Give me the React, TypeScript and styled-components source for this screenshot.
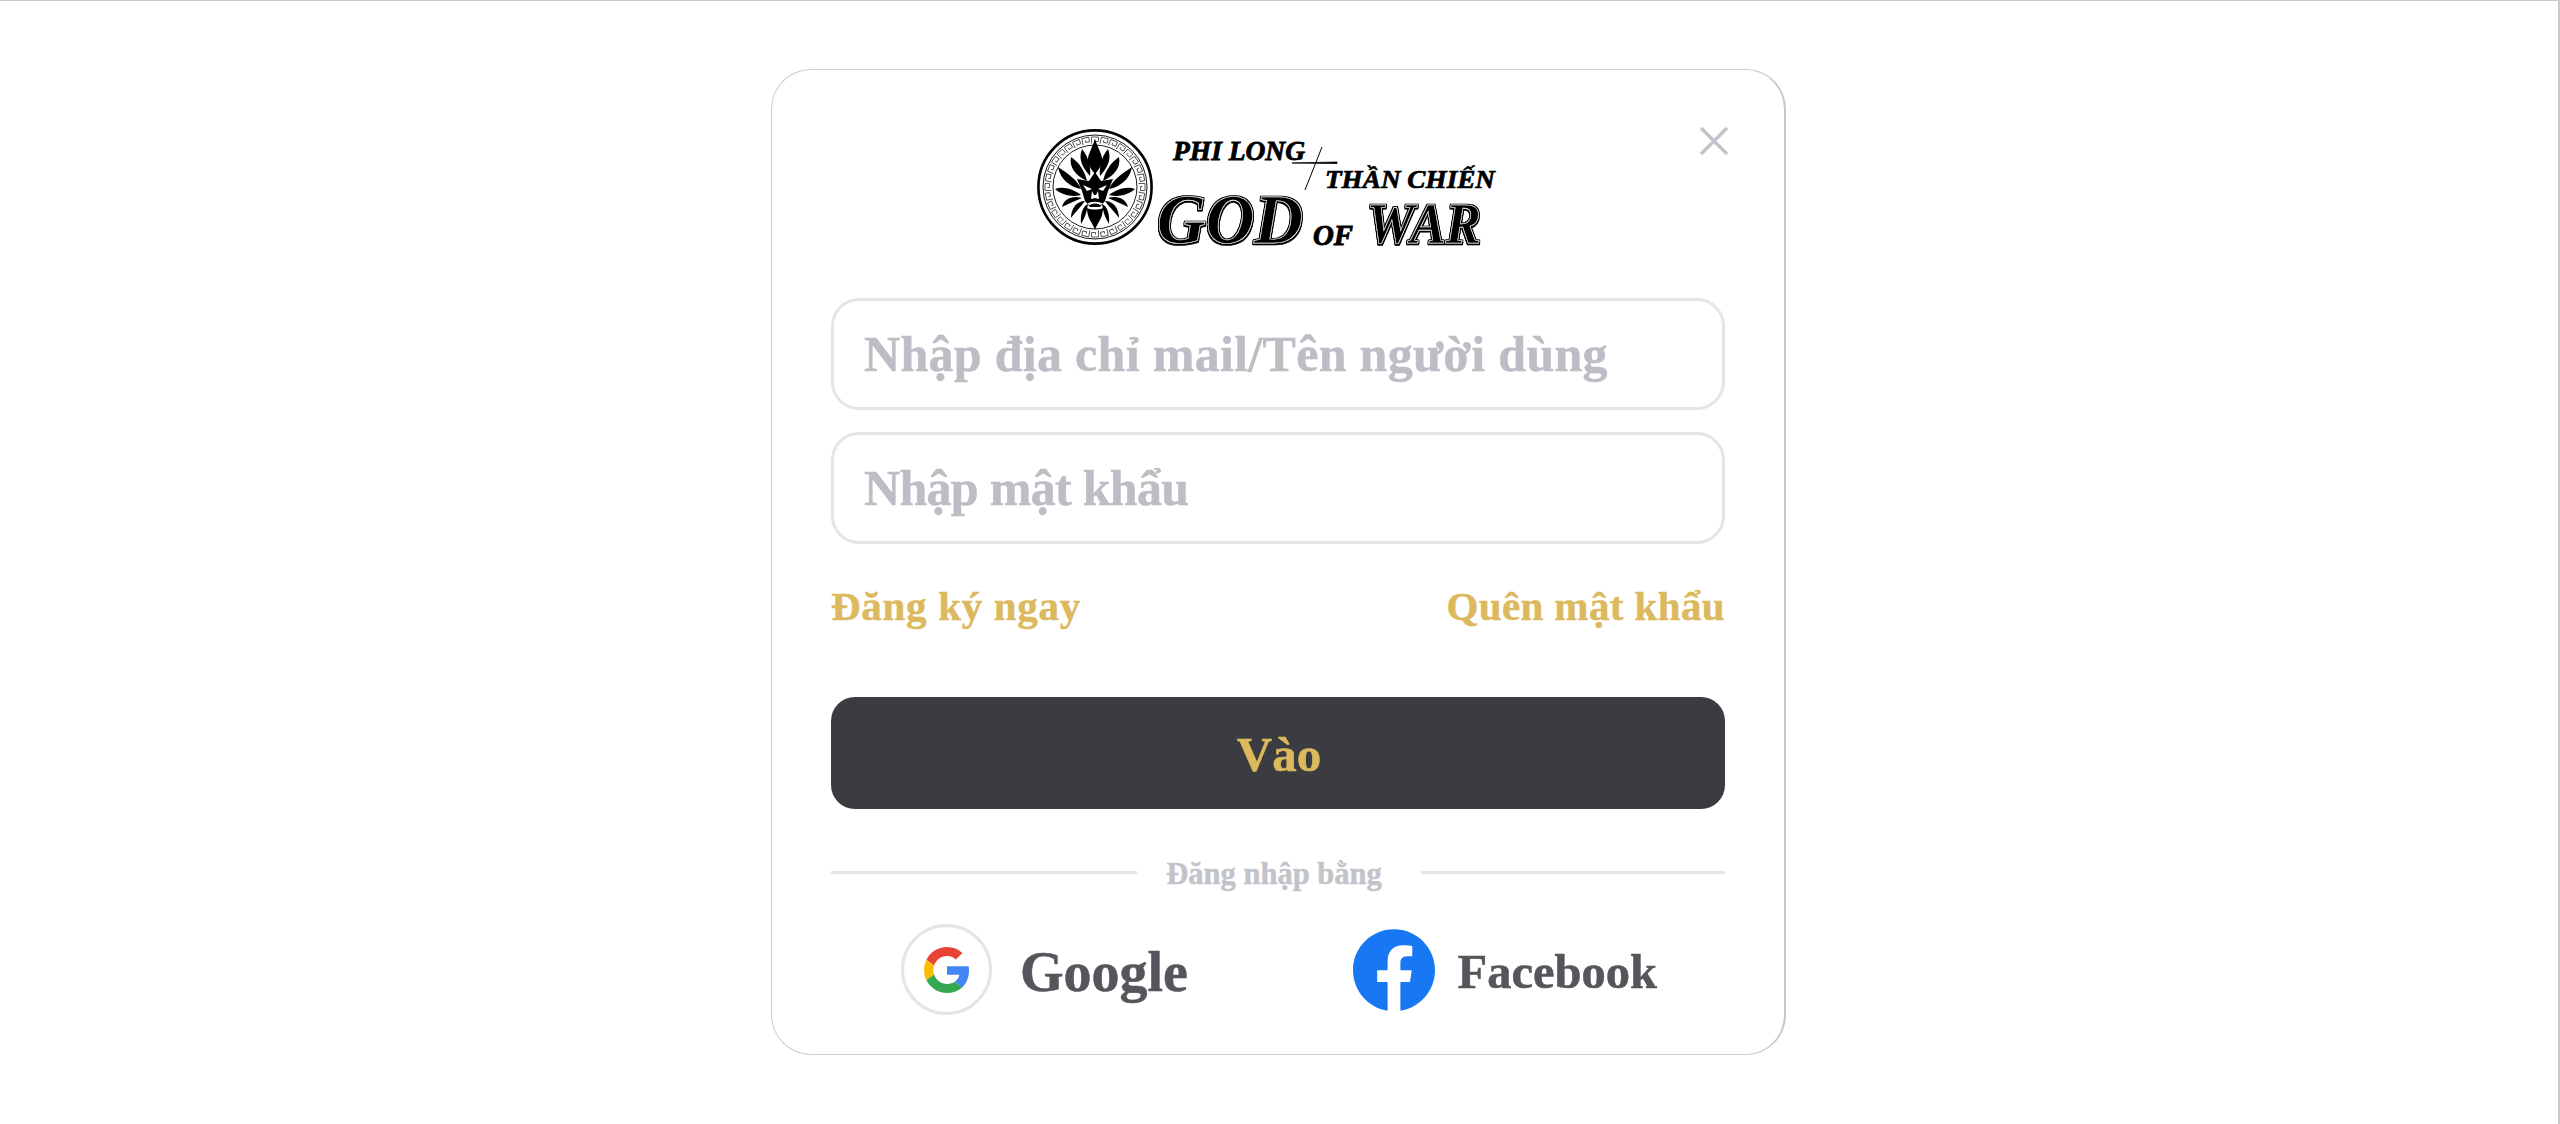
import React from "react";
import styled, { createGlobalStyle } from "styled-components";

const GlobalStyle = createGlobalStyle`
  html, body {
    margin: 0;
    padding: 0;
    background: #fff;
  }
  * {
    box-sizing: border-box;
  }
`;

const serif = `"Liberation Serif", "Noto Sans", serif`;

const Page = styled.div`
  width: 2560px;
  height: 1124px;
  border-top: 1px solid #c8c8ce;
  border-right: 2px solid #c8c8ce;
  padding: 68px 0 0 771px;
  overflow: hidden;
`;

const Card = styled.div`
  position: relative;
  width: 1015px;
  height: 986px;
  padding: 59px 59px 38px;
  border: 1px solid #c9ccd4;
  border-right: 2px solid #c4c6cc;
  border-radius: 40px;
  background: #fff;
  font-family: ${serif};
  -webkit-text-stroke: 0.5px currentColor;
`;

const CloseButton = styled.button`
  position: absolute;
  top: 55px;
  right: 54px;
  width: 32px;
  height: 32px;
  padding: 0;
  border: 0;
  background: none;
  color: #c3c4cb;
`;

const LogoRow = styled.div`
  display: flex;
  justify-content: center;
  padding-right: 22px;
  margin-bottom: 33px;
  height: 136px;
`;

const Form = styled.form`
  display: flex;
  flex-direction: column;
  gap: 22px;
`;

const Field = styled.input<{ $tracking: number }>`
  width: 100%;
  height: 112px;
  padding: 0 30px;
  border: 3px solid #e4e4e9;
  border-radius: 28px;
  background: #fff;
  font-family: ${serif};
  font-size: 50px;
  font-weight: 700;
  letter-spacing: ${(p) => p.$tracking}px;
  outline: none;
  &::placeholder {
    color: #bdbec5;
    opacity: 1;
    -webkit-text-stroke: 0.5px #bdbec5;
  }
`;

const LinkRow = styled.div`
  display: flex;
  justify-content: space-between;
  margin-top: 34px;
  height: 56px;
  align-items: center;
`;

const GoldLink = styled.a<{ $tracking: number }>`
  color: #dcb95c;
  font-size: 41px;
  font-weight: 700;
  letter-spacing: ${(p) => p.$tracking}px;
`;

const Submit = styled.button`
  display: block;
  width: 100%;
  height: 112px;
  margin-top: 63px;
  padding: 2px 0 0 2px;
  border: 0;
  border-radius: 24px;
  background: #3b3c41;
  color: #dcb95c;
  font-family: ${serif};
  font-size: 49px;
  font-weight: 700;
`;

const Divider = styled.div`
  display: flex;
  align-items: center;
  justify-content: space-between;
  margin-top: 47px;
  height: 36px;
  color: #c3c4cb;
  font-size: 30.5px;
  font-weight: 700;
`;

const DividerText = styled.span`
  margin-right: 10px;
`;

const DividerLine = styled.span<{ $width: number }>`
  display: block;
  width: ${(p) => p.$width}px;
  height: 3px;
  margin-top: -3px;
  background: #e4e4e9;
`;

const SocialRow = styled.div`
  display: flex;
  align-items: center;
  justify-content: space-between;
  margin-top: 32px;
  padding: 0 68px 0 70px;
`;

const SocialItem = styled.a<{ $gap: number }>`
  display: flex;
  align-items: center;
  gap: ${(p) => p.$gap}px;
  color: #55565b;
  font-weight: 700;
`;

const GoogleBadge = styled.span`
  display: flex;
  align-items: center;
  justify-content: center;
  width: 91px;
  height: 91px;
  border: 3px solid #e4e4e9;
  border-radius: 50%;
`;

const SocialLabel = styled.span<{ $size: number; $drop: number }>`
  padding-top: ${(p) => p.$drop}px;
  font-size: ${(p) => p.$size}px;
`;

const LogoText = styled.text<{ $weight: number }>`
  font-family: ${serif};
  font-weight: 700;
  font-style: italic;
  fill: #000;
  stroke: #000;
  stroke-width: ${(p) => p.$weight}px;
`;

const EngravedText = styled.text`
  font-family: ${serif};
  font-weight: 700;
  font-style: italic;
  fill: #000;
  stroke: #fff;
  stroke-width: 0.6px;
  filter: url(#engrave);
`;

const LionMark = () => {
  const flames = [
    "M45 20 C42 28 43 36 53 47 C54 40 52 28 45 20Z",
    "M34 28 C32 38 38 46 50 52 C48 43 43 34 34 28Z",
    "M21 38 C23 50 33 58 44 60 C41 52 32 45 21 38Z",
    "M18 60 C26 57 36 60 44 66 C36 68 26 67 18 60Z",
    "M25 78 C27 70 35 66 45 69 C38 72 31 75 25 78Z",
    "M34 89 C34 79 40 72 48 72 C44 78 38 83 34 89Z",
    "M44 95 C43 85 46 77 51 75 C50 82 48 89 44 95Z",
  ];
  return (
    <g>
      <circle cx="58" cy="58" r="56.6" fill="none" stroke="#000" strokeWidth="2.6" />
      <circle cx="58" cy="58" r="52" fill="none" stroke="#000" strokeWidth="0.9" />
      <circle cx="58" cy="58" r="42" fill="none" stroke="#000" strokeWidth="0.9" />
      {Array.from({ length: 32 }, (_, i) => (
        <path
          key={i}
          d="M-3.5 -43.5 v-6.5 h7 v4.5 h-4 v-2"
          transform={`translate(58 58) rotate(${i * 11.25})`}
          fill="none"
          stroke="#333"
          strokeWidth="0.8"
        />
      ))}
      <circle cx="58" cy="58" r="41" fill="#fff" />
      <path d="M58 10 C61 20 66 26 65 33 C64 38 61 41 58 45 C55 41 52 38 51 33 C50 26 55 20 58 10Z" />
      <path d="M40 50 L52 52 L58 43 L64 52 L76 50 L71 62 L68 72 L63 78 L53 78 L48 72 L45 62Z" />
      <path d="M46 56 L55 60 L50 62Z M70 56 L61 60 L66 62Z M55 62 L54 70 L58 69 L62 70 L61 62 L59 66 L57 66Z M50 75 C54 72 62 72 66 75 L63 76 C60 74 56 74 53 76Z" fill="#fff" />
      {flames.map((d) => (
        <React.Fragment key={d}>
          <path d={d} />
          <path d={d} transform="translate(116 0) scale(-1 1)" />
        </React.Fragment>
      ))}
      <path d="M58 101 C56 94 50 90 50 79 C54 81 62 81 66 79 C66 90 60 94 58 101Z" />
    </g>
  );
};

const Logo = () => (
  <svg width="460" height="136" viewBox="0 0 460 136">
    <defs>
      <filter id="engrave" x="-10%" y="-10%" width="120%" height="130%">
        <feMorphology in="SourceAlpha" operator="dilate" radius="0.6" result="fat" />
        <feOffset in="fat" dy="1.4" result="low" />
        <feMerge>
          <feMergeNode in="fat" />
          <feMergeNode in="low" />
          <feMergeNode in="SourceGraphic" />
        </feMerge>
      </filter>
    </defs>
    <LionMark />
    <LogoText $weight={0.8} x="136" y="31" fontSize="27" textLength="132" lengthAdjust="spacingAndGlyphs">PHI LONG</LogoText>
    <LogoText $weight={0.7} x="288" y="59" fontSize="26" textLength="170" lengthAdjust="spacingAndGlyphs">THẦN CHIẾN</LogoText>
    <EngravedText x="120" y="114" fontSize="70" textLength="146" lengthAdjust="spacingAndGlyphs">GOD</EngravedText>
    <LogoText $weight={1} x="276" y="116" fontSize="30" textLength="40" lengthAdjust="spacingAndGlyphs">OF</LogoText>
    <EngravedText x="330" y="114" fontSize="58" textLength="114" lengthAdjust="spacingAndGlyphs">WAR</EngravedText>
    <path d="M255 34 L300 33 L300 34.5Z" stroke="#000" strokeWidth="0.8" />
    <path d="M285 18 L268 61" stroke="#000" strokeWidth="1" fill="none" />
  </svg>
);

const GoogleIcon = () => (
  <svg width="46" height="46" viewBox="0 0 48 48">
    <path fill="#EA4335" d="M24 9.5c3.54 0 6.71 1.22 9.21 3.6l6.85-6.85C35.9 2.38 30.47 0 24 0 14.62 0 6.51 5.38 2.56 13.22l7.98 6.19C12.43 13.72 17.74 9.5 24 9.5z" />
    <path fill="#4285F4" d="M46.98 24.55c0-1.57-.15-3.09-.38-4.55H24v9.02h12.94c-.58 2.96-2.26 5.48-4.78 7.18l7.73 6c4.51-4.18 7.09-10.36 7.09-17.65z" />
    <path fill="#FBBC05" d="M10.53 28.59c-.48-1.45-.76-2.99-.76-4.59s.27-3.14.76-4.59l-7.98-6.19C.92 16.46 0 20.12 0 24c0 3.88.92 7.54 2.56 10.78l7.97-6.19z" />
    <path fill="#34A853" d="M24 48c6.48 0 11.93-2.13 15.89-5.81l-7.73-6c-2.15 1.45-4.92 2.3-8.16 2.3-6.26 0-11.57-4.22-13.47-9.91l-7.98 6.19C6.51 42.62 14.62 48 24 48z" />
  </svg>
);

const FacebookIcon = () => (
  <svg width="82" height="82" viewBox="0 0 24 24">
    <circle cx="12" cy="12" r="11.5" fill="#fff" />
    <path fill="#1877F2" d="M24 12.073c0-6.627-5.373-12-12-12s-12 5.373-12 12c0 5.99 4.388 10.954 10.125 11.854v-8.385H7.078v-3.47h3.047V9.43c0-3.007 1.792-4.669 4.533-4.669 1.312 0 2.686.235 2.686.235v2.953H15.83c-1.491 0-1.956.925-1.956 1.874v2.25h3.328l-.532 3.47h-2.796v8.385C19.612 23.027 24 18.062 24 12.073z" />
  </svg>
);

const App = () => (
  <>
    <GlobalStyle />
    <Page>
      <Card>
        <CloseButton type="button" aria-label="Đóng">
          <svg width="32" height="32" viewBox="0 0 32 32" fill="none" stroke="currentColor" strokeWidth="3.4">
            <path d="M3 3 L29 29 M29 3 L3 29" />
          </svg>
        </CloseButton>
        <LogoRow>
          <Logo />
        </LogoRow>
        <Form>
          <Field $tracking={0.3} placeholder="Nhập địa chỉ mail/Tên người dùng" />
          <Field $tracking={-0.7} placeholder="Nhập mật khẩu" />
        </Form>
        <LinkRow>
          <GoldLink $tracking={0.7}>Đăng ký ngay</GoldLink>
          <GoldLink $tracking={0.4}>Quên mật khẩu</GoldLink>
        </LinkRow>
        <Submit type="button">Vào</Submit>
        <Divider>
          <DividerLine $width={306} />
          <DividerText>Đăng nhập bằng</DividerText>
          <DividerLine $width={304} />
        </Divider>
        <SocialRow>
          <SocialItem $gap={28}>
            <GoogleBadge>
              <GoogleIcon />
            </GoogleBadge>
            <SocialLabel $size={56} $drop={5}>Google</SocialLabel>
          </SocialItem>
          <SocialItem $gap={23}>
            <FacebookIcon />
            <SocialLabel $size={48.5} $drop={3}>Facebook</SocialLabel>
          </SocialItem>
        </SocialRow>
      </Card>
    </Page>
  </>
);

export default App;
